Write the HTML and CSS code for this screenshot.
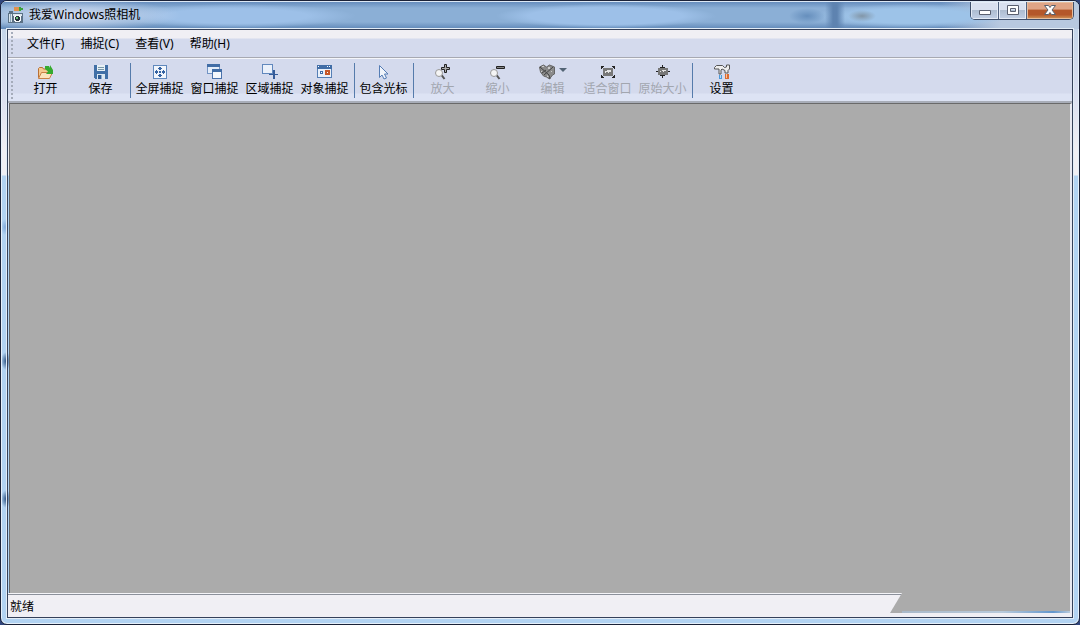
FILE: index.html
```html
<!DOCTYPE html>
<html lang="zh-CN">
<head>
    <meta charset="UTF-8">
    <title>我爱Windows照相机</title>
    <link rel="stylesheet" href="styles.css">
</head>
<body>
<div class="window">
    <header class="titlebar">
        <svg class="app-icon" viewBox="0 0 16 16" shape-rendering="crispEdges">
            <path fill="#e0914e" d="M6 0h5v4H6z"/>
            <path fill="#3aa33a" d="M11 0h2v1h2v2h-2v1h-2z"/>
            <path fill="#5b7186" d="M1 4h4v2H1zM0 6h15v10H0z"/>
            <path fill="#dbe6ee" d="M1 7h3v8H1zM5 7h9v2H5z"/>
            <path fill="#8ba7bd" d="M2 7h1v8H2z"/>
            <path fill="#f5f8fb" d="M7 8h5v1h1v5h-1v1H7v-1H6V9h1z"/>
            <path fill="#26313c" d="M8 9h3v1h1v3h-1v1H8v-1H7v-3h1z"/>
            <path fill="#69c27b" d="M8 10h2v2H8z"/>
        </svg>
        <h1 class="title">我爱Windows照相机</h1>
        <div class="caption-buttons">
            <button class="caption-btn" type="button" aria-label="最小化">
                <svg width="14" height="14" viewBox="0 0 14 14"><path fill="#fff" stroke="#5a6070" d="M1.500 6.500h11v4h-11z"/></svg>
            </button>
            <button class="caption-btn" type="button" aria-label="最大化">
                <svg width="14" height="14" viewBox="0 0 14 14"><path fill="#fff" fill-rule="evenodd" stroke="#5a6070" d="M1.500 1.500h11v9h-11zM4.500 4.500v3h5v-3z"/></svg>
            </button>
            <button class="caption-btn close" type="button" aria-label="关闭">
                <svg width="14" height="14" viewBox="0 0 14 14"><path fill="#fff" stroke="#59606c" d="M1.500 1.500h4L7 3.500l1.500-2h4L9 6l3.500 4.500h-4L7 8.500l-1.500 2h-4L5 6z"/></svg>
            </button>
        </div>
    </header>

    <div class="client">
        <nav class="menubar">
            <span class="grip"></span>
            <button class="menu-item" type="button">文件(F)</button>
            <button class="menu-item" type="button">捕捉(C)</button>
            <button class="menu-item" type="button">查看(V)</button>
            <button class="menu-item" type="button">帮助(H)</button>
        </nav>

        <div class="toolbar" role="toolbar">
            <span class="grip"></span>
            <button class="tool" type="button">
                <svg class="icon" viewBox="0 0 16 16">
                    <path fill="#f4c88f" stroke="#b96f35" d="M.5 13.500v-9l1-1h3l1 1.500h5v8z"/>
                    <path fill="#fbe3bd" stroke="#c98145" d="M.5 14.500l3-6h11l-3 6z"/>
                    <path fill="#35aa2f" d="M7 2h4l1 2V1l3 5v4H8l2-2.500L7 5z"/>
                </svg>
                <span>打开</span>
            </button>
            <button class="tool" type="button">
                <svg class="icon" viewBox="0 0 16 16" shape-rendering="crispEdges">
                    <path fill="#416fa6" d="M1 1h14v14H2l-1-1z"/>
                    <path fill="#e8f0f5" d="M4 1h8v6H4z"/>
                    <path fill="#7797a8" d="M5 3h6v1H5zM5 5h6v1H5z"/>
                    <path fill="#dbe7ef" d="M4 10h8v5H4z"/>
                    <path fill="#315c93" d="M5 11h3v4H5z"/>
                    <path fill="#8eadd0" d="M8 11h1v4H8z"/>
                </svg>
                <span>保存</span>
            </button>
            <span class="separator"></span>
            <button class="tool" type="button">
                <svg class="icon" viewBox="0 0 16 16" shape-rendering="crispEdges">
                    <path fill="#f2f6fc" stroke="#5f88bd" d="M1.500 1.500h13v13h-13z"/>
                    <path fill="#3462a2" d="M7 7h2v2H7zM6 4h4v1H6zM6 11h4v1H6zM4 6h1v4H4zM11 6h1v4h-1zM7 3h2v3H7zM7 10h2v3H7zM3 7h3v2H3zM10 7h3v2h-3z"/>
                </svg>
                <span>全屏捕捉</span>
            </button>
            <button class="tool" type="button">
                <svg class="icon" viewBox="0 0 16 16" shape-rendering="crispEdges">
                    <path fill="#e4edf9" stroke="#7394c4" d="M.5.500h12v9H.5z"/>
                    <path fill="#416da6" d="M0 0h13v3H0z"/>
                    <path fill="#f5f8fc" stroke="#4a73ac" d="M5.500 5.500h9v9h-9z"/>
                    <path fill="#416da6" d="M5 5h10v3H5z"/>
                </svg>
                <span>窗口捕捉</span>
            </button>
            <button class="tool" type="button">
                <svg class="icon" viewBox="0 0 16 16" shape-rendering="crispEdges">
                    <path fill="#eaf0fa" stroke="#6188bd" d="M.5.500h10v9H.5z"/>
                    <path fill="#355b99" d="M11 6h2v4h3v1h-3v4h-2v-4H7v-1h4z"/>
                </svg>
                <span>区域捕捉</span>
            </button>
            <button class="tool" type="button">
                <svg class="icon" viewBox="0 0 16 16" shape-rendering="crispEdges">
                    <path fill="#e9f0fa" stroke="#557fb5" d="M.5 1.500h14v12H.5z"/>
                    <path fill="#416da6" d="M0 1h15v4H0z"/>
                    <path fill="#fff" d="M1 2h1v1H1zM10 2h1v1h-1zM12 2h1v1h-1z"/>
                    <path fill="#fff" stroke="#416da6" d="M3.500 7.500h2v2h-2z"/>
                    <path fill="#fff" stroke="#c65828" stroke-width="2" d="M9 7h3v3H9z"/>
                </svg>
                <span>对象捕捉</span>
            </button>
            <span class="separator"></span>
            <button class="tool" type="button">
                <svg class="icon" viewBox="0 0 16 16">
                    <path fill="#f1f5fb" stroke="#557db5" d="M3.500 1.500v12L6 11l2 4 2.500-1-2-4H12z"/>
                </svg>
                <span>包含光标</span>
            </button>
            <span class="separator"></span>
            <button class="tool" type="button" disabled>
                <svg class="icon" viewBox="0 0 16 16">
                    <path stroke="#555" stroke-width="2" d="M6.500 11l3 4"/>
                    <circle cx="4" cy="9" r="3.500" fill="#f5f5f5" stroke="#999"/>
                    <path fill="#aaa" stroke="#222" d="M9.500.500h2v3h3v2h-3v3h-2v-3h-3v-2h3z"/>
                </svg>
                <span>放大</span>
            </button>
            <button class="tool" type="button" disabled>
                <svg class="icon" viewBox="0 0 16 16">
                    <path stroke="#555" stroke-width="2" d="M6.500 11l3 4"/>
                    <circle cx="4" cy="9" r="3.500" fill="#f5f5f5" stroke="#999"/>
                    <path fill="#888" stroke="#222" d="M6.500 2.500h8v2h-8z"/>
                </svg>
                <span>缩小</span>
            </button>
            <button class="tool" type="button" disabled>
                <span class="icon-row">
                    <svg class="icon" viewBox="0 0 16 16">
                        <path fill="#8b8b8b" stroke="#666" d="M.5 3l4-2 3 2 3-2 5 2v7l-2 1-3 4-3-2-3-1-3-4z"/>
                        <path fill="none" stroke="#444" d="M1 3l9 8 1 4M5 11l9-8M3 9l4-3"/>
                        <path fill="#ccc" d="M3 2h2v1H3zM9 3h2v2H9zM2 7h1v1H2zM12 7h1v1h-1zM8 11l2 2H8z"/>
                    </svg>
                    <svg class="arrow" viewBox="0 0 8 16"><path fill="#536475" d="M0 4h8L4 8z"/></svg>
                </span>
                <span>编辑</span>
            </button>
            <button class="tool" type="button" disabled>
                <svg class="icon" viewBox="0 0 16 16" shape-rendering="crispEdges">
                    <path fill="#e5e5e5" stroke="#777" stroke-width="2" d="M4 5h8v6H4z"/>
                    <path fill="#777" d="M4 9h2V8h2v1h1V8h2v1h1v2H4zM5 6h2v1H5z"/>
                    <path fill="#222" d="M1 2h3v1H3v1H2v1H1zM12 2h3v3h-1V4h-1V3h-1zM1 11h1v1h1v1h1v1H1zM14 11h1v3h-3v-1h1v-1h1z"/>
                </svg>
                <span>适合窗口</span>
            </button>
            <button class="tool" type="button" disabled>
                <svg class="icon" viewBox="0 0 16 16" shape-rendering="crispEdges">
                    <path fill="#e5e5e5" stroke="#777" stroke-width="2" d="M4 5h8v5H4z"/>
                    <path fill="#777" d="M4 8h2V7h2v1h1V7h2v1h1v2H4zM5 6h2v1H5z"/>
                    <path fill="#222" d="M7 1h1v2h2v1H5V3h2zM5 11h5v1H8v2H7v-2H5zM1 7h2v1H1zM13 7h2v1h-2z"/>
                </svg>
                <span>原始大小</span>
            </button>
            <span class="separator"></span>
            <button class="tool" type="button">
                <svg class="icon" viewBox="0 0 16 16">
                    <path fill="#eee" stroke="#555" d="M.5 5V3.500l2-2h6l2 2 2-.500V1h3v4L14 6.500V9h-3V6.500L8 5 7 6v4H5V5z"/>
                    <path fill="#4b99d9" d="M5 11h3v4H5z"/>
                    <path fill="#b8dcf5" d="M6 11h1v3H6z"/>
                    <path fill="#dc6b31" d="M11 10h4v5h-4z"/>
                    <path fill="#f8c39b" d="M12 10h1v4h-1z"/>
                </svg>
                <span>设置</span>
            </button>
        </div>

        <main class="canvas"></main>

        <footer class="statusbar">
            <div class="status-panel">就绪</div>
            <div class="status-tail"></div>
        </footer>
    </div>
</div>
</body>
</html>
```

FILE: styles.css
```css
* {
    box-sizing: border-box;
}
body {
    margin: 0;
    background-color: #30457c;
    font-family: "Noto Sans", "Noto Sans CJK SC", sans-serif;
    font-size: 12px;
    line-height: 18px;
    color: #000;
}
button {
    margin: 0;
    padding: 0;
    border: none;
    background: none;
    font: inherit;
    color: inherit;
}
.window {
    display: flex;
    flex-direction: column;
    min-height: 100vh;
    border: 1px solid #1b2238;
    border-radius: 7px;
    overflow: hidden;
    box-shadow: inset 0 0 0 1px #e6f0fa;
    background:
        radial-gradient(ellipse 5px 9px at 5px 360px, #2f5585, transparent),
        radial-gradient(ellipse 5px 9px at 5px 498px, #2f5585, transparent),
        radial-gradient(ellipse 4px 8px at 4px 226px, #83abdc, transparent),
        linear-gradient(#c5d5e9 30px, #d9def0 90px, #f0eff4 150px, #f0eff4 174px, #b2d3f2 175px);
}

/* title bar */
.titlebar {
    display: flex;
    align-items: center;
    height: 28px;
    padding: 0 5px 2px 6px;
    border-top: 1px solid #dce8f5;
    background:
        radial-gradient(ellipse 110px 16px at 70px 13px, #d5def1, transparent),
        radial-gradient(ellipse 120px 12px at 235px 14px, #9dc0e8 60%, transparent),
        radial-gradient(ellipse 110px 12px at 605px 14px, #9dc0e8 70%, transparent),
        radial-gradient(ellipse 18px 8px at 806px 14px, #668fbd, transparent),
        linear-gradient(90deg, transparent 824px, #5e83b0 832px, #5e83b0 836px, transparent 844px),
        radial-gradient(ellipse 14px 6px at 861px 14px, #8296a8, transparent),
        radial-gradient(ellipse 100px 12px at 910px 14px, #9dc3e8 60%, transparent),
        linear-gradient(90deg, transparent 940px, #b8c9e0 1000px),
        linear-gradient(#668dbd, #8bafd6 6px, #8bafd6 20px, #5f87b7);
}
.app-icon {
    width: 16px;
    height: 16px;
    margin: 0 5px 0 1px;
}
.title {
    flex: 1;
    margin: 0;
    font-size: 12px;
    font-weight: normal;
}
.caption-buttons {
    display: flex;
    align-self: flex-start;
    height: 18px;
    border: 1px solid #40506b;
    border-top: none;
    border-radius: 0 0 5px 5px;
    overflow: hidden;
}
.caption-btn {
    display: flex;
    align-items: center;
    justify-content: center;
    width: 28px;
    border-right: 1px solid #51627f;
    background: linear-gradient(#d9e0ef 45%, #aebdd1 50%, #c2d0e6);
    box-shadow: inset 0 0 0 1px #e4ebf6;
}
.caption-btn.close {
    width: 46px;
    border-right: none;
    background: linear-gradient(#dfa486 40%, #b4572a 50%, #b4572a 75%, #d39a5c);
    box-shadow: inset 0 0 0 1px #e6bd9e;
}

/* client area */
.client {
    flex: 1;
    display: flex;
    flex-direction: column;
    margin: 0 6px 6px;
    border: 1px solid #35415a;
    box-shadow: 0 0 0 1px #e3edf7;
}
.menubar {
    display: flex;
    align-items: center;
    height: 28px;
    padding-left: 3px;
    border-bottom: 1px solid #a7a9b2;
    background: linear-gradient(#f0eff4 8px, #d4daed 9px);
}
.grip {
    align-self: stretch;
    width: 3px;
    margin: 2px 5px 2px 0;
    background: conic-gradient(from 270deg at 2px 2px, #a5acba 90deg, transparent 0) 0 0 / 4px 4px;
}
.menu-item {
    padding: 0 8px;
}
.toolbar {
    display: flex;
    height: 45px;
    padding-left: 3px;
    border-top: 1px solid #f5f6fa;
    border-bottom: 2px solid #a8adb8;
    background: linear-gradient(#d4daed 34px, #dde3f4 35px);
}
.toolbar .grip {
    margin-right: 4px;
}
.tool {
    display: flex;
    flex-direction: column;
    align-items: center;
    width: 55px;
    padding-top: 5px;
    white-space: nowrap;
}
.tool:disabled {
    color: #a2a6af;
}
.icon {
    width: 16px;
    height: 16px;
    flex: none;
}
.icon-row {
    display: flex;
    gap: 4px;
}
.arrow {
    width: 8px;
    height: 16px;
}
.separator {
    width: 1px;
    margin: 4px 1px 3px 2px;
    background-color: #557bab;
}
.canvas {
    flex: 1;
    border: 1px solid #696969;
    border-right: 2px solid #e8e9f1;
    border-bottom: none;
    margin-left: 1px;
    background-color: #ababab;
}

/* status bar */
.statusbar {
    display: flex;
    height: 24px;
    border-right: 2px solid #e8e9f1;
    border-bottom: 4px solid #f0eff4;
    background-color: #ababab;
}
.status-panel {
    flex: 1;
    padding: 4px 2px 0;
    border-top: 1px solid #f4f4f8;
    background: linear-gradient(#8b909a 1px, #f0eff4 1px);
    clip-path: polygon(0 0, 100% 0, calc(100% - 12px) 100%, 0 100%);
}
.status-tail {
    width: 168px;
    background: linear-gradient(90deg, #a9b9c9, #b8cadb 60%, #6396cc 90%, #b8cadb) bottom / 100% 2px no-repeat;
}
```
